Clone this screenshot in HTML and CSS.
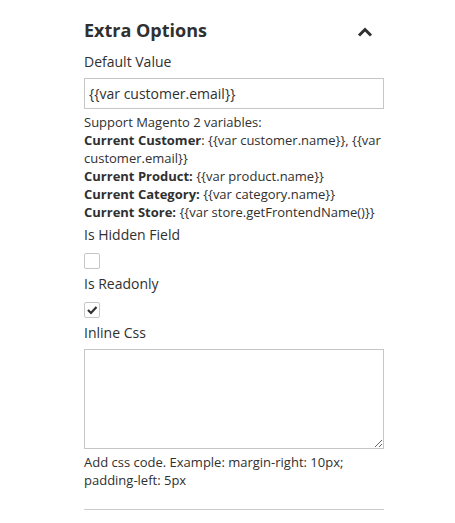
FILE: index.html
```html
<!DOCTYPE html>
<html lang="en">
<head>
  <meta charset="UTF-8">
  <meta name="viewport" content="width=device-width, initial-scale=1">
  <title>Extra Options</title>
  <link rel="stylesheet" href="styles.css">
</head>
<body>
  <div class="panel">
    <div class="panel-head">
      <h3>Extra Options</h3>
      <svg class="chevron" width="16" height="10" viewBox="0 0 16 10">
        <polyline points="2,8.5 8,2.5 14,8.5" fill="none" stroke="#303030" stroke-width="3"/>
      </svg>
    </div>

    <div class="field">
      <label class="field-label">Default Value</label>
      <input type="text" class="text-input" value="{{var customer.email}}">
      <div class="field-note">
        Support Magento 2 variables:<br>
        <b>Current Customer</b>: {{var customer.name}}, {{var customer.email}}<br>
        <b>Current Product:</b> {{var product.name}}<br>
        <b>Current Category:</b> {{var category.name}}<br>
        <b>Current Store:</b> {{var store.getFrontendName()}}
      </div>
    </div>

    <div class="field field-check">
      <label class="field-label">Is Hidden Field</label>
      <span class="check"></span>
    </div>

    <div class="field field-check">
      <label class="field-label">Is Readonly</label>
      <span class="check checked">
        <svg width="14" height="14" viewBox="0 0 14 14">
          <polyline points="3,7 6,10 11.5,4" fill="none" stroke="#303030" stroke-width="2.2"/>
        </svg>
      </span>
    </div>

    <div class="field">
      <label class="field-label">Inline Css</label>
      <textarea class="text-area"></textarea>
      <div class="field-note">Add css code. Example: margin-right: 10px; padding-left: 5px</div>
    </div>

    <div class="divider"></div>
  </div>
</body>
</html>
```

FILE: styles.css
```css
* {
  margin: 0;
  padding: 0;
  box-sizing: border-box;
}
body {
  font-family: 'Open Sans', sans-serif;
  background: #ffffff;
  color: #303030;
}
.panel {
  width: 300px;
  margin-left: 84px;
  padding-top: 18px;
}
.panel-head {
  display: flex;
  justify-content: space-between;
  align-items: center;
  padding-right: 11px;
}
.panel-head h3 {
  font-size: 18px;
  font-weight: 700;
  line-height: 24px;
}
.chevron {
  display: block;
  margin-top: 3px;
}
.field {
  display: flex;
  flex-direction: column;
  align-items: flex-start;
}
.panel-head + .field {
  margin-top: 10px;
}
.field + .field {
  margin-top: 4px;
}
.field-check + .field {
  margin-top: 5px;
}
.field-label {
  font-size: 14px;
  line-height: 20px;
  margin-bottom: 6px;
}
.text-input {
  width: 300px;
  height: 31px;
  border: 1px solid #c6c6c6;
  padding: 0 4px;
  font-family: 'Open Sans', sans-serif;
  font-size: 14px;
  color: #303030;
  outline: none;
}
.text-area {
  width: 300px;
  height: 100px;
  border: 1px solid #c6c6c6;
  font-family: 'Open Sans', sans-serif;
  font-size: 14px;
  color: #303030;
  outline: none;
}
.field-note {
  margin-top: 4px;
  font-size: 13px;
  line-height: 18px;
}
.field-note b {
  font-weight: 700;
}
.check {
  display: flex;
  align-items: center;
  justify-content: center;
  width: 16px;
  height: 16px;
  border: 1px solid #c6c6c6;
  border-radius: 2px;
  margin-top: 2px;
}
.divider {
  margin-top: 20px;
  height: 1px;
  background: #cccccc;
}
```
